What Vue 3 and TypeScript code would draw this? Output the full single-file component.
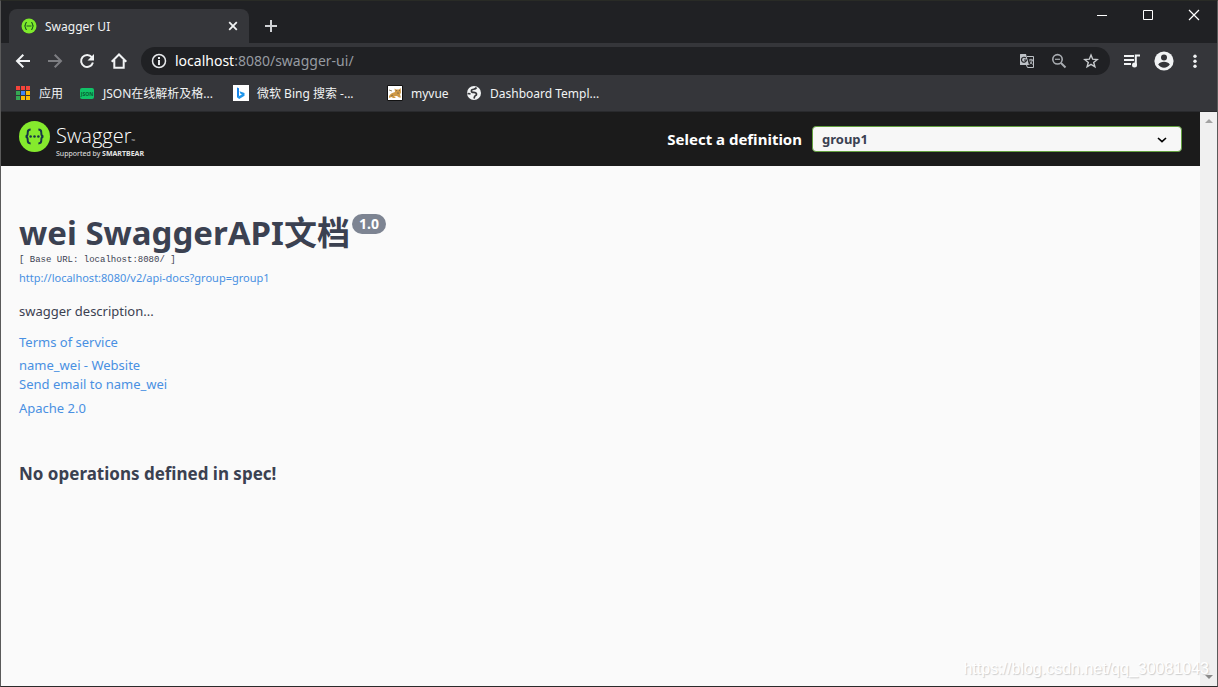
<script setup lang="ts">
import { ref } from 'vue'

const definitions: string[] = ['group1']
const selected = ref<string>('group1')
const apps: string[] = ['#f4443a', '#f4443a', '#f4443a', '#34a853', '#4285f4', '#fbbc04', '#34a853', '#fbbc04', '#fbbc04']
</script>

<template>
  <div class="window">
    <header class="chrome">
      <div class="tabstrip">
        <div class="tab">
          <svg class="i16" viewBox="0 0 16 16" aria-hidden="true">
            <circle cx="8" cy="8" r="7.5" fill="#7eea2b" />
            <path d="M6 4.5c-1.3 0-1.5.4-1.5 1.5S4.4 8 3.3 8c1.100 0 1.200.8 1.200 2s.2 1.500 1.500 1.500M10 4.500c1.300 0 1.500.4 1.500 1.500S11.600 8 12.700 8c-1.100 0-1.200.8-1.200 2s-.2 1.500-1.500 1.500M5.500 8h5" fill="none" stroke="#1d5b20" stroke-width="1.200" />
          </svg>
          <span class="tab-title">Swagger UI</span>
          <button class="icon-btn tab-close" aria-label="Close tab">
            <svg class="i16" viewBox="0 0 16 16"><path d="M4.200 4.200l7.600 7.600M11.800 4.200l-7.600 7.600" stroke="#f1f3f4" stroke-width="1.800" /></svg>
          </button>
        </div>
        <button class="icon-btn new-tab" aria-label="New tab">
          <svg class="i16" viewBox="0 0 16 16"><path d="M8 2v12M2 8h12" stroke="#d0d2d5" stroke-width="2" /></svg>
        </button>
        <div class="win-controls">
          <button class="win-btn" aria-label="Minimize"><svg viewBox="0 0 12 12"><path d="M1 6.500h10" stroke="#fff" /></svg></button>
          <button class="win-btn" aria-label="Maximize"><svg viewBox="0 0 12 12"><path d="M1.500 1.500h9v9h-9z" fill="none" stroke="#fff" /></svg></button>
          <button class="win-btn" aria-label="Close"><svg viewBox="0 0 12 12"><path d="M1 1l10 10M11 1L1 11" stroke="#fff" stroke-width="1.200" /></svg></button>
        </div>
      </div>

      <div class="toolbar">
        <nav class="nav-btns">
          <button class="icon-btn" aria-label="Back"><svg class="i16" viewBox="0 0 16 16"><path d="M15 8H2.500M8.300 1.700L2 8l6.300 6.300" fill="none" stroke="#f1f3f4" stroke-width="2" /></svg></button>
          <button class="icon-btn" aria-label="Forward"><svg class="i16" viewBox="0 0 16 16"><path d="M1 8h12.500M7.700 1.700L14 8l-6.300 6.300" fill="none" stroke="#7d7e82" stroke-width="2" /></svg></button>
          <button class="icon-btn" aria-label="Reload"><svg class="i16" viewBox="0 0 16 16"><path d="M12.800 4.200A6 6 0 1 0 13.900 9.500" fill="none" stroke="#f1f3f4" stroke-width="2" /><path d="M15 1v6.500H8.500z" fill="#f1f3f4" /></svg></button>
          <button class="icon-btn" aria-label="Home"><svg class="i16" viewBox="0 0 16 16"><path d="M.7 8.700L8 1.500l7.300 7.200M3.300 7v7.700h9.400V7" fill="none" stroke="#f1f3f4" stroke-width="2" /></svg></button>
        </nav>
        <div class="omnibox">
          <svg class="i16" viewBox="0 0 16 16" aria-hidden="true"><circle cx="8" cy="8" r="6.500" fill="none" stroke="#e8eaed" stroke-width="1.500" /><path d="M8 7v5M8 4v2" stroke="#e8eaed" stroke-width="2" /></svg>
          <span class="url"><b>localhost</b>:8080/swagger-ui/</span>
          <button class="icon-btn" aria-label="Translate">
            <svg class="i16" viewBox="0 0 16 16"><path d="M1.500 1H7l3 11H1.500a.5.500 0 0 1-.5-.5v-10a.5.500 0 0 1 .5-.5z" fill="#bdc1c6" /><path d="M8 3.500h6.500v11H8.500L7.500 12" fill="none" stroke="#bdc1c6" /><path d="M6.800 5A2.500 2.500 0 1 0 7.500 7H5" fill="none" stroke="#202124" stroke-width="1.200" /><path d="M10 7h4M12 5.800V7M13.300 7c-.4 2-1.500 3.500-2.700 4.300M11 8.500l2.600 3" fill="none" stroke="#bdc1c6" /></svg>
          </button>
          <button class="icon-btn" aria-label="Zoom"><svg class="i16" viewBox="0 0 16 16"><circle cx="6.500" cy="6.300" r="4.700" fill="none" stroke="#a9adb2" stroke-width="1.600" /><path d="M10 10l4.500 4.500" stroke="#a9adb2" stroke-width="2" /><path d="M4 6.300h5" stroke="#a9adb2" stroke-width="1.200" /></svg></button>
          <button class="icon-btn" aria-label="Bookmark this tab"><svg class="i16" viewBox="0 0 16 16"><path d="M8 2l1.700 4.200 4.500.3-3.500 2.900 1.200 4.400L8 11.400l-3.900 2.400 1.200-4.400-3.500-2.900 4.500-.3z" fill="none" stroke="#c8cbce" stroke-width="1.400" /></svg></button>
        </div>
        <button class="icon-btn media" aria-label="Media controls"><svg class="i18" viewBox="0 0 18 18"><path d="M1 4h10M1 8h10M1 12h7" stroke="#f1f3f4" stroke-width="1.800" /><path d="M12.800 13V3.500H17" fill="none" stroke="#f1f3f4" stroke-width="2" /><circle cx="11.500" cy="13" r="2.500" fill="#f1f3f4" /></svg></button>
        <button class="icon-btn" aria-label="Profile"><svg class="i20" viewBox="0 0 20 20"><circle cx="10" cy="10" r="9.600" fill="#f1f3f4" /><circle cx="10" cy="6.500" r="3" fill="#35363a" /><path d="M4.200 13.500c1-1.800 3.500-2.700 5.800-2.700s4.800.9 5.800 2.700c-1.300 2-3.300 3.200-5.800 3.200s-4.500-1.200-5.800-3.200z" fill="#35363a" /></svg></button>
        <button class="icon-btn" aria-label="Menu"><svg class="i16" viewBox="0 0 16 16" fill="#f1f3f4"><circle cx="8" cy="3.200" r="1.700" /><circle cx="8" cy="8.200" r="1.700" /><circle cx="8" cy="13.200" r="1.700" /></svg></button>
      </div>

      <nav class="bookmarks">
        <a href="#" class="bookmark apps">
          <span class="app-grid"><i v-for="(c, n) in apps" :key="n" :style="{ background: c }"></i></span>
          <span>应用</span>
        </a>
        <a href="#" class="bookmark clipped">
          <svg class="i16" viewBox="0 0 16 16" aria-hidden="true"><rect x="1" y="3" width="14" height="11" rx="2" fill="#11c267" /><text x="8" y="10.500" text-anchor="middle" font-family="Open Sans" font-size="5" font-weight="700" fill="#075c30">JSON</text></svg>
          <span>JSON在线解析及格...</span>
        </a>
        <a href="#" class="bookmark clipped">
          <svg class="i16" viewBox="0 0 16 16" aria-hidden="true"><path fill="#fff" d="M0 0h16v16H0z" /><path d="M4 2.500l2 .7v8.300l-2 1z" fill="#1683e8" /><path d="M4 12.300l2-1.300 3-1.500-1.500-.8-1-2.500 5 1.800v2.700L6.200 14z" fill="#1f95ea" /></svg>
          <span>微软 Bing 搜索 -...</span>
        </a>
        <a href="#" class="bookmark myvue">
          <svg class="i16" viewBox="0 0 16 16" aria-hidden="true"><path fill="#fff" stroke="#111" d="M.5.500h15v15H.5z" /><path d="M2 11c1-2 3-3.300 6-4l-.5-3.500L9 4.500h3l1.700-1.500.3 4.500-1 2 1 3h-2l-2-1.500-3 .2 2 1.800H6L4.500 12 2 13z" fill="#cf9a48" /><path d="M2 5l3 1M6 10l-2 1M9 5l1 1M13 5l-1 1M10 8l2 .2" stroke="#77684a" stroke-width=".8" /></svg>
          <span>myvue</span>
        </a>
        <a href="#" class="bookmark">
          <svg class="i16" viewBox="0 0 16 16" aria-hidden="true"><circle cx="8" cy="8" r="7" fill="#f1f3f4" /><path d="M10.500 2.500C9.500 4.500 8 4 6.500 4.500S5 7 6.500 7.300s3.800.2 4 1.700-1.300 1.500-1.800 2.300L8 13.500M1.500 8.500l3 .3" fill="none" stroke="#35363a" stroke-width="1.700" /></svg>
          <span>Dashboard Templ...</span>
        </a>
      </nav>
    </header>

    <div class="viewport">
      <div class="page">
        <div class="topbar">
          <a href="#" class="logo" aria-label="Swagger, supported by SmartBear">
            <svg class="logo-mark" viewBox="0 0 32 32"><circle cx="16" cy="16" r="16" fill="#85ea2d" /><path d="M12 8.800c-2.400 0-3 .8-3 2.700 0 2.300.4 4.200-2.200 4.500 2.600.3 2.200 2.200 2.200 4.500 0 1.900.6 2.700 3 2.700M20 8.800c2.400 0 3 .8 3 2.700 0 2.300-.4 4.200 2.200 4.500-2.600.3-2.200 2.200-2.200 4.500 0 1.900-.6 2.700-3 2.700" fill="none" stroke="#173647" stroke-width="2" /><g fill="#173647"><circle cx="12" cy="16" r="1.300" /><circle cx="16" cy="16" r="1.300" /><circle cx="20" cy="16" r="1.300" /></g></svg>
            <span class="logo-words">
              <span class="logo-name">Swagger<small>™</small></span>
              <span class="logo-by">Supported by <b>SMARTBEAR</b></span>
            </span>
          </a>
          <div class="definition">
            <label for="definition">Select a definition</label>
            <div class="select-wrap">
              <select id="definition" v-model="selected">
                <option v-for="d in definitions" :key="d" :value="d">{{ d }}</option>
              </select>
              <svg class="chevron" viewBox="0 0 10 6" aria-hidden="true"><path d="M1 1l4 3.700L9 1" fill="none" stroke="#000" stroke-width="1.600" /></svg>
            </div>
          </div>
        </div>

        <main class="info">
          <h1>wei SwaggerAPI文档<span class="version">1.0</span></h1>
          <pre>[ Base URL: localhost:8080/ ]</pre>
          <a href="#" class="docs">http://localhost:8080/v2/api-docs?group=group1</a>
          <p>swagger description...</p>
          <a href="#" class="terms">Terms of service</a>
          <a href="#">name_wei - Website</a>
          <a href="#" class="mail">Send email to name_wei</a>
          <a href="#">Apache 2.0</a>
          <h3>No operations defined in spec!</h3>
        </main>
      </div>
      <div class="scrollbar" aria-hidden="true">
        <svg viewBox="0 0 8 4"><path d="M4 0l4 4H0z" fill="#a3a3a3" /></svg>
        <svg viewBox="0 0 8 4"><path d="M0 0h8L4 4z" fill="#8a8a8a" /></svg>
      </div>
      <div class="watermark">https://blog.csdn.net/qq_30081043</div>
    </div>
  </div>
</template>

<style>
body {
  margin: 0;
  background: #fafafa;
}
</style>

<style scoped>
* {
  box-sizing: border-box;
}
.window {
  display: flex;
  flex-direction: column;
  min-height: 100vh;
  border: 1px solid #5a5a5a;
  border-top-color: #292b26;
  border-bottom-color: #2b2b2b;
  background: #fafafa;
  font-family: "Noto Sans", "Noto Sans CJK SC", sans-serif;
}
a {
  text-decoration: none;
}
svg {
  display: block;
  flex: none;
}
.i16 { width: 16px; height: 16px; }
.i18 { width: 18px; height: 18px; }
.i20 { width: 20px; height: 20px; }
.icon-btn,
.win-btn {
  display: flex;
  align-items: center;
  justify-content: center;
  padding: 0;
  border: 0;
  background: none;
}
.chrome {
  background: #35363a;
  border-bottom: 1px solid #292a2d;
  color: #f1f3f4;
}
.tabstrip {
  display: flex;
  align-items: stretch;
  height: 42px;
  padding-left: 8px;
  background: #202124;
}
.tab {
  display: flex;
  align-items: center;
  width: 240px;
  margin-top: 8px;
  padding: 0 8px 0 12px;
  border-radius: 8px 8px 0 0;
  background: #35363a;
  font-size: 12px;
}
.tab-title {
  flex: 1;
  margin-left: 8px;
}
.new-tab {
  width: 44px;
  padding-top: 8px;
}
.win-controls {
  display: flex;
  margin-left: auto;
}
.win-btn {
  width: 46px;
  height: 28px;
}
.win-btn svg {
  width: 12px;
  height: 12px;
}
.toolbar {
  display: flex;
  align-items: center;
  gap: 13px;
  height: 36px;
  padding-right: 14px;
}
.nav-btns {
  display: flex;
  gap: 16px;
  padding: 0 1px 0 14px;
}
.omnibox {
  display: flex;
  flex: 1;
  align-items: center;
  gap: 16px;
  height: 28px;
  padding: 0 11px 0 10px;
  border-radius: 14px;
  background: #202124;
}
.url {
  flex: 1;
  margin-left: -8px;
  color: #969ba1;
  font-size: 14px;
  line-height: 20px;
}
.url b {
  color: #fff;
  font-weight: 400;
}
.bookmarks {
  display: flex;
  align-items: center;
  height: 32px;
  padding: 0 0 4px 14px;
}
.bookmark {
  display: flex;
  align-items: center;
  gap: 8px;
  color: #f1f3f4;
  font-size: 12px;
  white-space: nowrap;
}
.apps { width: 64px; }
.clipped { width: 154px; }
.myvue { width: 79px; }
.app-grid {
  display: grid;
  grid-template-columns: repeat(3, 4px);
  grid-auto-rows: 4px;
  gap: 1px;
  width: 16px;
  padding: 1px;
}
.viewport {
  position: relative;
  display: flex;
  flex: 1;
}
.page {
  flex: 1;
}
.topbar {
  display: flex;
  align-items: center;
  justify-content: space-between;
  height: 54px;
  padding: 0 18px;
  background: #1b1b1b;
}
.logo {
  display: flex;
  gap: 6px;
  color: #fff;
}
.logo-mark {
  width: 31px;
  height: 31px;
}
.logo-words {
  display: flex;
  flex-direction: column;
}
.logo-name {
  font-family: "Open Sans", sans-serif;
  font-size: 20px;
  font-weight: 300;
  line-height: 30px;
}
.logo-name small {
  font-size: 5px;
  line-height: 0;
}
.logo-by {
  color: #e4e4e4;
  font-size: 7px;
  line-height: 6px;
}
.definition {
  display: flex;
  align-items: center;
  gap: 10px;
}
.definition label {
  color: #fff;
  font-size: 15px;
  font-weight: 700;
}
.select-wrap {
  position: relative;
  width: 370px;
}
select {
  appearance: none;
  display: block;
  width: 100%;
  height: 26px;
  padding: 0 9px;
  border: 1px solid #62a03f;
  border-radius: 4px;
  background: #f7f7f7;
  color: #3b4151;
  font-family: inherit;
  font-size: 13px;
  font-weight: 700;
}
.chevron {
  position: absolute;
  top: 11px;
  right: 15px;
  width: 10px;
  height: 6px;
  pointer-events: none;
}
.info {
  display: flex;
  flex-direction: column;
  align-items: flex-start;
  padding: 48px 18px;
  color: #3b4151;
  font-size: 13px;
  line-height: 19px;
}
h1 {
  display: flex;
  align-items: flex-start;
  gap: 2px;
  margin: 0;
  font-size: 33px;
  line-height: 38px;
}
.version {
  padding: 0 7px;
  border-radius: 10px;
  background: #7d8492;
  color: #fff;
  font-size: 14px;
  line-height: 20px;
}
pre {
  margin: 0;
  font-family: "Liberation Mono", monospace;
  font-size: 9px;
  line-height: 16px;
}
.info a {
  color: #4990e2;
}
.info .docs {
  font-size: 11px;
}
p {
  margin: 15px 0 12px;
}
.info .terms {
  margin-bottom: 4px;
}
.info .mail {
  margin-bottom: 5px;
}
h3 {
  margin: 44px 0 0;
  font-size: 17px;
  line-height: 24px;
}
.scrollbar {
  display: flex;
  flex-direction: column;
  align-items: center;
  justify-content: space-between;
  width: 17px;
  padding: 7px 0;
  background: #f0f0f0;
}
.scrollbar svg {
  width: 8px;
  height: 4px;
}
.watermark {
  position: absolute;
  right: 8px;
  bottom: 8px;
  color: #fff;
  font-family: "Liberation Sans", Arial, sans-serif;
  font-size: 16px;
  line-height: 18px;
  text-shadow: 1px 1px 1px #ccc;
}
</style>
